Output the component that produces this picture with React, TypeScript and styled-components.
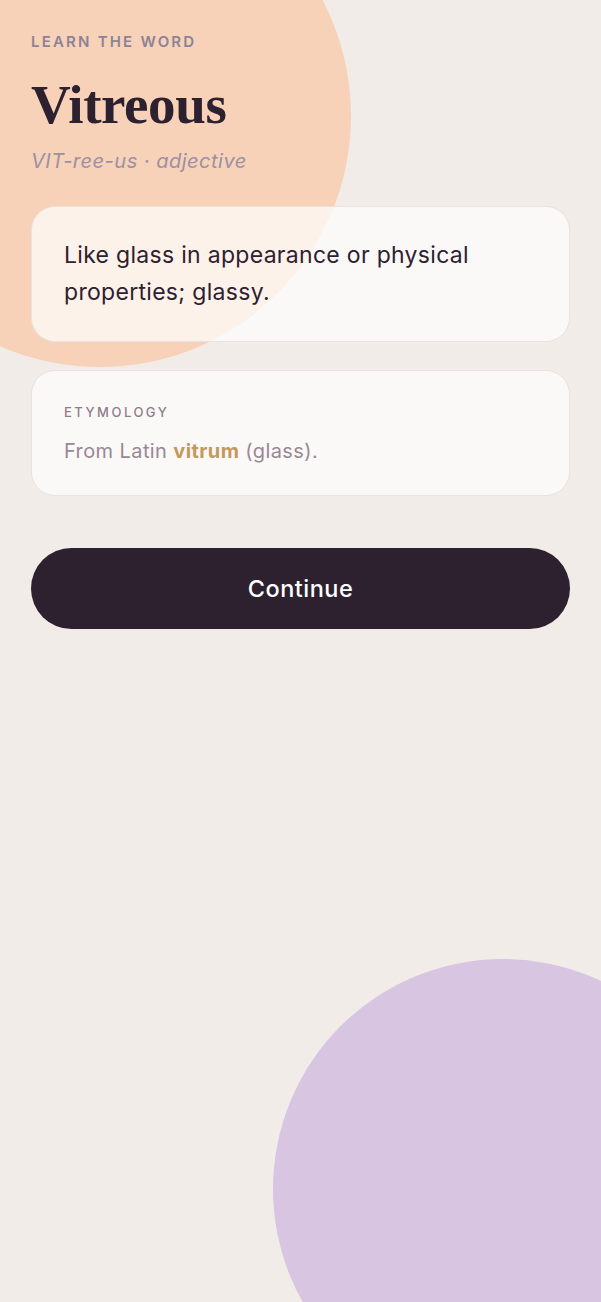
import React from 'react'
import styled, { createGlobalStyle } from 'styled-components'

const GlobalStyle = createGlobalStyle`
  html, body {
    margin: 0;
    padding: 0;
    background: #f1ece8;
  }
  * { box-sizing: border-box; }
`

export default function App() {
  return (
    <Page>
      <GlobalStyle />
      <Blob $color='#f7d2b9' $size={502} $left={-151} $top={-135} />
      <Blob $color='#d7c5e2' $size={460} $left={273} $top={959} />

      <Content>
        <Eyebrow>Learn the word</Eyebrow>
        <Word>Vitreous</Word>
        <Pronunciation>VIT-ree-us · adjective</Pronunciation>

        <Card>
          <Definition>Like glass in appearance or physical properties; glassy.</Definition>
        </Card>

        <Card $gapTop={28}>
          <CardLabel>Etymology</CardLabel>
          <Etymology>
            From Latin <Root>vitrum</Root> (glass).
          </Etymology>
        </Card>

        <ContinueButton type='button'>Continue</ContinueButton>
      </Content>
    </Page>
  )
}

const Page = styled.div`
  position: relative;
  min-height: 1302px;
  overflow: hidden;
  background: #f1ece8;
  font-family: Inter, 'Noto Sans', sans-serif;
`

const Blob = styled.div<{ $color: string; $size: number; $left: number; $top: number }>`
  position: absolute;
  left: ${p => p.$left}px;
  top: ${p => p.$top}px;
  width: ${p => p.$size}px;
  height: ${p => p.$size}px;
  border-radius: 50%;
  background: ${p => p.$color};
`

const Content = styled.main`
  position: relative;
  z-index: 1;
  display: flex;
  flex-direction: column;
  padding: 33px 31px 0;
`

const Eyebrow = styled.div`
  font-size: 15px;
  line-height: 18px;
  font-weight: 600;
  letter-spacing: 2.2px;
  text-transform: uppercase;
  color: #8d8395;
`

const Word = styled.h1`
  margin: 24px 0 0;
  font-family: 'Liberation Serif', 'DejaVu Serif', serif;
  font-weight: 700;
  font-size: 55px;
  line-height: 60px;
  letter-spacing: -0.4px;
  color: #2d212f;
`

const Pronunciation = styled.div`
  margin-top: 13px;
  font-size: 20px;
  line-height: 26px;
  font-style: italic;
  letter-spacing: 0.5px;
  color: #9b90a2;
`

const Card = styled.section<{ $gapTop?: number }>`
  margin-top: ${p => p.$gapTop ?? 32}px;
  padding: 30px 32px;
  border-radius: 24px;
  background: rgba(255, 255, 255, 0.7);
  border: 1.5px solid #e9e2de;
`

const Definition = styled.p`
  margin: 0;
  font-size: 23px;
  line-height: 37px;
  letter-spacing: 0.3px;
  color: #2d212f;
`

const CardLabel = styled.div`
  padding-top: 2px;
  font-size: 13px;
  line-height: 18px;
  font-weight: 500;
  letter-spacing: 2.5px;
  text-transform: uppercase;
  color: #8f7d8b;
`

const Etymology = styled.p`
  margin: 16px 0 0;
  font-size: 20px;
  line-height: 28px;
  letter-spacing: 0.4px;
  color: #9a8794;
`

const Root = styled.b`
  font-weight: 700;
  color: #c49a5c;
`

const ContinueButton = styled.button`
  margin-top: 52px;
  height: 81px;
  width: 100%;
  border: none;
  border-radius: 999px;
  background: #2d212f;
  color: #ffffff;
  font-family: Inter, 'Noto Sans', sans-serif;
  font-size: 23.5px;
  font-weight: 500;
  letter-spacing: 0.5px;
  cursor: pointer;
`
